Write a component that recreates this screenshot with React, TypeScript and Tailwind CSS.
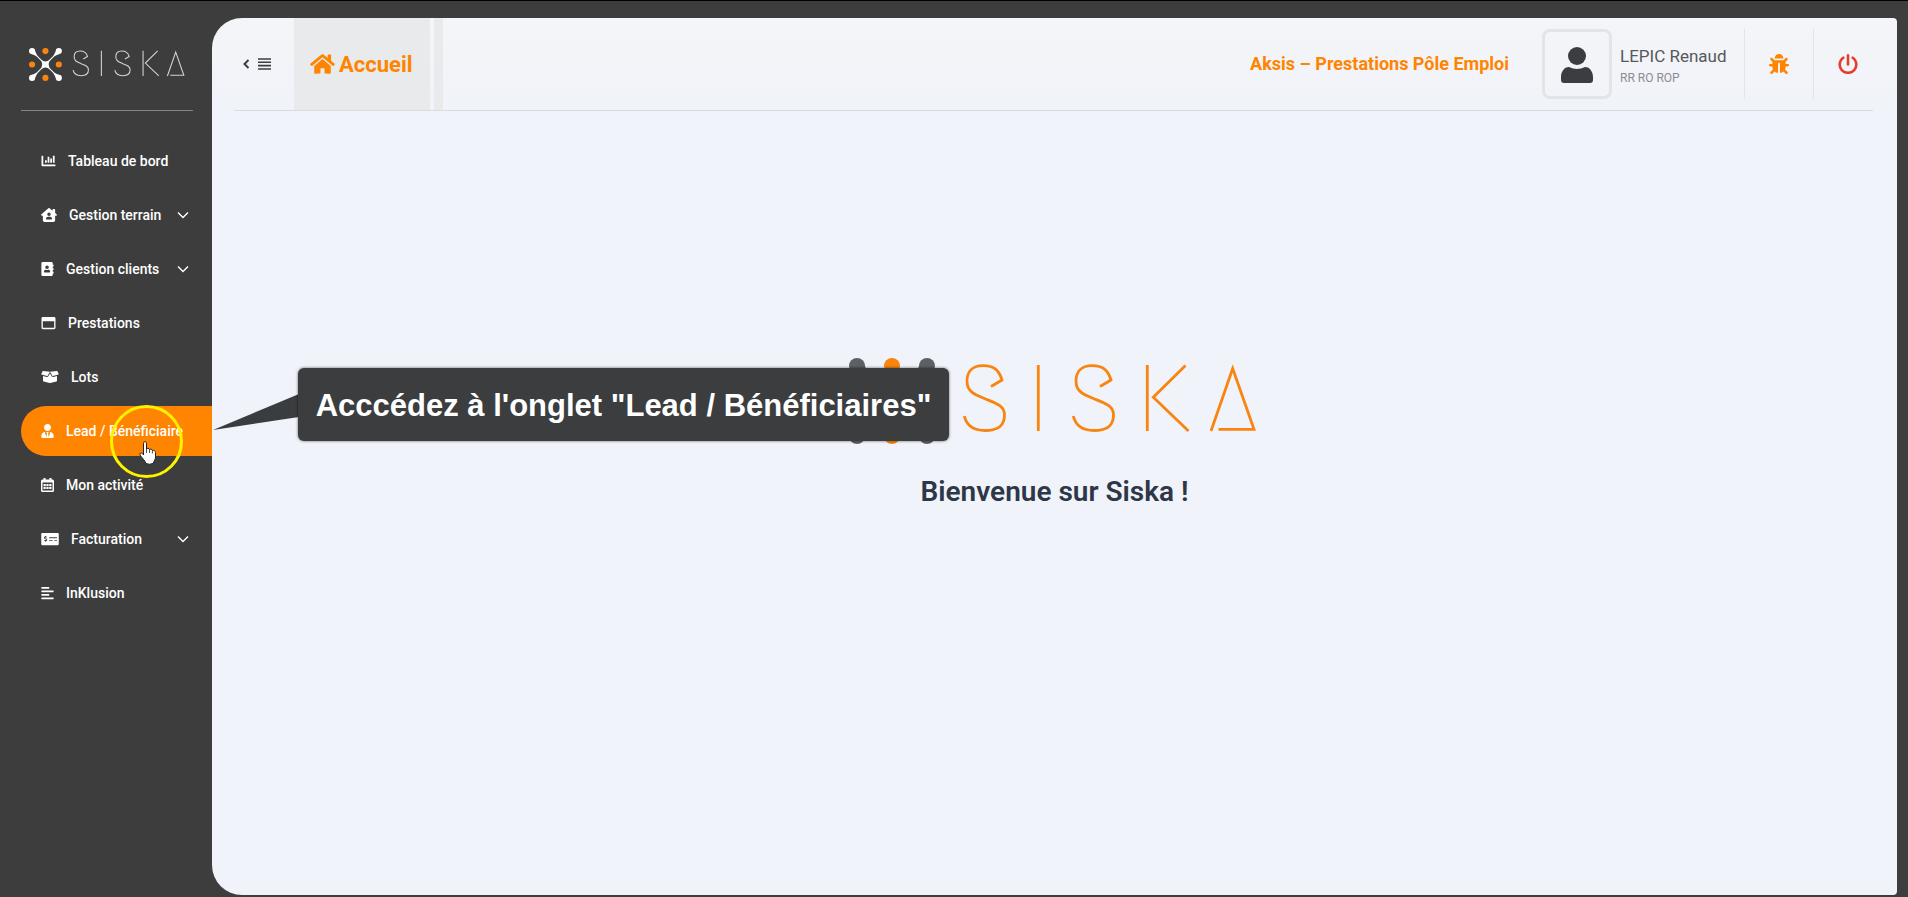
import { useState } from 'react';
import type { IconType } from 'react-icons';
import {
  FaAddressBook,
  FaAlignLeft,
  FaBoxOpen,
  FaBug,
  FaChartBar,
  FaHome,
  FaMoneyCheckAlt,
  FaRegWindowMaximize,
  FaUserTie,
} from 'react-icons/fa';
import { FaHouseChimneyUser } from 'react-icons/fa6';

type NavItem = {
  label: string;
  icon: IconType | typeof CalendarIcon;
  iconWidth: string;
  hasChildren?: boolean;
};

function CalendarIcon({ className }: { className?: string }) {
  return (
    <svg viewBox="0 0 13 14" className={className}>
      <path
        fill="currentColor"
        fillRule="evenodd"
        d="M2.500 0H4.500V1.500H8.500V0H10.500V1.500H11.500Q13 1.500 13 3V12.500Q13 14 11.500 14H1.500Q0 14 0 12.500V3Q0 1.500 1.500 1.500H2.500ZM1.500 4.500V12.500H11.500V4.500Z"
      />
      <path fill="currentColor" d="M2.500 6H4.800V8.200H2.500ZM5.400 6H7.600V8.200H5.400ZM8.200 6H10.500V8.200H8.200ZM2.500 8.900H4.800V11.100H2.500ZM5.400 8.900H7.600V11.100H5.400ZM8.200 8.900H10.500V11.100H8.200Z" />
    </svg>
  );
}

const navItems: NavItem[] = [
  { label: 'Tableau de bord', icon: FaChartBar, iconWidth: 'w-[15px]' },
  { label: 'Gestion terrain', icon: FaHouseChimneyUser, iconWidth: 'w-[16px]', hasChildren: true },
  { label: 'Gestion clients', icon: FaAddressBook, iconWidth: 'w-[13px]', hasChildren: true },
  { label: 'Prestations', icon: FaRegWindowMaximize, iconWidth: 'w-[15px]' },
  { label: 'Lots', icon: FaBoxOpen, iconWidth: 'w-[18px]' },
  { label: 'Lead / Bénéficiaire', icon: FaUserTie, iconWidth: 'w-[13px]' },
  { label: 'Mon activité', icon: CalendarIcon, iconWidth: 'w-[13px]' },
  { label: 'Facturation', icon: FaMoneyCheckAlt, iconWidth: 'w-[18px]', hasChildren: true },
  { label: 'InKlusion', icon: FaAlignLeft, iconWidth: 'w-[13px]' },
];

// Dots + line-drawn wordmark, shared by the sidebar and the welcome screen
function Logo({ className, ink, letters }: { className: string; ink: string; letters: string }) {
  const s =
    'M142 28.5L153 22C150 12 145 7.7 134 7.7C123 7.7 118 14 118 23C118 34 126 36.5 136.5 41C148 45.5 155.5 48 155.5 57C155.5 68 149 72.5 136 72.5C124 72.5 117.5 67 115.3 58';

  return (
    <svg viewBox="0 0 408 86" className={className} role="img" aria-label="Siska" fill="none">
      <g stroke={ink} strokeWidth="3">
        <path d="M8 8L78 78M78 8L8 78" />
      </g>
      <g fill={ink}>
        <path d="M34 34Q43 39 52 34Q47 43 52 52Q43 47 34 52Q39 43 34 34Z" stroke={ink} strokeWidth="3" />
        <path d="M4 14L14 4L23 23ZM72 4L82 14L63 23ZM4 72L14 82L23 63ZM72 82L82 72L63 63Z" />
        <circle cx="8" cy="8" r="8" />
        <circle cx="78" cy="8" r="8" />
        <circle cx="8" cy="78" r="8" />
        <circle cx="78" cy="78" r="8" />
      </g>
      <g fill="#f98410">
        <circle cx="43" cy="8" r="8" />
        <circle cx="8" cy="43" r="8" />
        <circle cx="78" cy="43" r="8" />
        <circle cx="43" cy="78" r="8" />
      </g>
      <g stroke={letters} strokeWidth="2.8">
        <path d={s} />
        <path d="M189.3 7V73" />
        <path d={s} transform="translate(109 0)" />
        <path d="M298.3 7V73M336.5 7.5L304.3 39.3L339.5 73" />
        <path d="M362 73L383.7 10.5L405 71.3H369.5" />
      </g>
    </svg>
  );
}

// Guided-tour step attached to the current menu entry
function TourStep() {
  return (
    <>
      <div className="pointer-events-none absolute top-[-1px] left-[89px] size-[73px] rounded-full border-3 border-[#fff200]" />
      <svg viewBox="0 0 18 24" className="pointer-events-none absolute top-[35px] left-[118px] h-6 w-[18px]">
        <path
          d="M4.500 2.200C4.500 .2 7.500 .2 7.500 2.200V8C8 7 10 7 10.500 8.500C11.300 7.800 13 8.100 13.400 9.500C14.800 9 16.500 9.800 16.500 11.500V16C16.500 18.500 15 20 14 22.500Q10.500 24 7 22.500C6 19.500 3 17 1 14C.2 12.400 2.200 11.400 3.500 12.600L4.500 14Z"
          fill="#fff"
          stroke="#222"
          strokeWidth="1"
        />
        <path d="M7.500 8V12M10.500 8.500V12M13.400 9.500V12.500" stroke="#222" strokeWidth=".8" />
      </svg>
      <div role="tooltip" className="absolute top-[-38px] left-[192px] flex items-start">
        <svg viewBox="0 0 86 72" className="h-[72px] w-[86px] shrink-0">
          <path d="M0 62L86 26V49Z" fill="#3a3d40" />
        </svg>
        <p className="-ml-px flex h-[73px] w-[651px] items-center justify-center rounded-md bg-[#3b3d3f] pt-1 font-['Liberation_Sans',sans-serif] text-[31px] font-bold whitespace-nowrap text-white shadow-[0_0_3px_#00000099]">
          Acccédez à l'onglet "Lead / Bénéficiaires"
        </p>
      </div>
    </>
  );
}

function Sidebar() {
  const [active, setActive] = useState('Lead / Bénéficiaire');

  return (
    <aside className="relative z-10 w-[212px] shrink-0 text-white">
      <div className="ml-[21px] flex h-[93px] w-[172px] items-center border-b border-[#858585] pl-2">
        <Logo className="h-[33px] w-[156px]" ink="#ffffff" letters="#d4d4d4" />
      </div>
      <nav className="pt-[25px] pl-[21px]">
        <ul className="flex flex-col gap-1">
          {navItems.map(({ label, icon: Icon, iconWidth, hasChildren }) => (
            <li key={label} className="relative">
              <button
                type="button"
                onClick={() => setActive(label)}
                className={`flex h-[50px] w-full items-center rounded-l-full pr-[23px] pl-5 text-left text-sm font-medium whitespace-nowrap ${
                  active === label ? 'bg-[#ff8400]' : ''
                }`}
              >
                <Icon className={`mr-3 h-[14px] shrink-0 ${iconWidth}`} />
                {label}
                {hasChildren && (
                  <svg viewBox="0 0 12 8" className="ml-auto h-2 w-3" fill="none" stroke="currentColor" strokeWidth="1.4">
                    <path d="M1 1.500L6 6.500L11 1.500" />
                  </svg>
                )}
              </button>
              {active === label && label === 'Lead / Bénéficiaire' && <TourStep />}
            </li>
          ))}
        </ul>
      </nav>
    </aside>
  );
}

function Header() {
  return (
    <header className="mr-6 ml-[22px] flex h-[93px] items-stretch border-b border-[#d9dce0]">
      <button type="button" aria-label="Réduire le menu" className="flex w-[60px] items-center gap-2 pl-[9px] text-[#3b3d40]">
        <svg viewBox="0 0 7 10" className="h-[10px] w-[7px]" fill="none" stroke="currentColor" strokeWidth="2">
          <path d="M5.500 1L1.500 5L5.500 9" />
        </svg>
        <svg viewBox="0 0 13 12" className="h-3 w-[13px]" stroke="currentColor" strokeWidth="1.600">
          <path d="M0 1H13M0 4.300H13M0 7.600H13M0 11H13" />
        </svg>
      </button>
      <a href="#accueil" className="flex w-[136px] items-center gap-1 bg-[#e9eaec] pl-4 text-[22px] font-bold text-[#ff8400]">
        <FaHome className="h-[22px] w-[25px]" />
        Accueil
      </a>
      <div className="ml-1 w-[9px] bg-[#e9eaec]" />

      <div className="ml-auto flex items-center">
        <span className="mr-[33px] text-lg font-bold text-[#ff8400]">Aksis – Prestations Pôle Emploi</span>
        <div className="flex size-[70px] items-center justify-center rounded-lg border-3 border-[#e2e4e7] pt-0.5">
          <svg viewBox="0 0 32 36" className="h-9 w-8" fill="#3b3d40">
            <circle cx="16" cy="9" r="9" />
            <path d="M8 20Q16 24 24 20C29 20 32 25 32 30V33Q32 36 29 36H3Q0 36 0 33V30C0 25 3 20 8 20Z" />
          </svg>
        </div>
        <div className="ml-2 flex w-[124px] flex-col pt-1">
          <span className="text-[17px] leading-6 text-[#56585b]">LEPIC Renaud</span>
          <span className="text-xs leading-5 text-[#8b8d90]">RR RO ROP</span>
        </div>
        <button
          type="button"
          aria-label="Signaler un bug"
          className="flex h-[70px] w-[69px] items-center justify-center border-l border-[#e2e4e7] text-[#ff8400]"
        >
          <FaBug className="size-5" />
        </button>
        <button
          type="button"
          aria-label="Déconnexion"
          className="flex h-[70px] w-[60px] items-center justify-center border-l border-[#e2e4e7] pl-2 text-[#e0402f]"
        >
          <svg viewBox="0 0 20 20" className="size-5" fill="none" stroke="currentColor" strokeWidth="2.600" strokeLinecap="round">
            <path d="M10 1.300V10.500M5.300 3.700A8.300 8.300 0 1 0 14.700 3.700" />
          </svg>
        </button>
      </div>
    </header>
  );
}

export default function App() {
  return (
    <div className="flex min-h-screen border-t border-black bg-[#3d3d3d] pt-[17px] pr-[11px] pb-0.5 font-[Roboto,sans-serif]">
      <Sidebar />
      <main className="min-w-0 flex-1 rounded-l-[30px] rounded-r-sm bg-linear-to-b from-[#f4f5f8] to-[#f0f3f9] to-[90px]">
        <Header />
        <section className="flex flex-col items-center pt-[247px]">
          <Logo className="mr-1 h-[86px] w-[408px]" ink="#5d6164" letters="#f98410" />
          <h1 className="mt-7 text-[28px] leading-10 font-semibold text-[#2d3748]">Bienvenue sur Siska !</h1>
        </section>
      </main>
    </div>
  );
}
